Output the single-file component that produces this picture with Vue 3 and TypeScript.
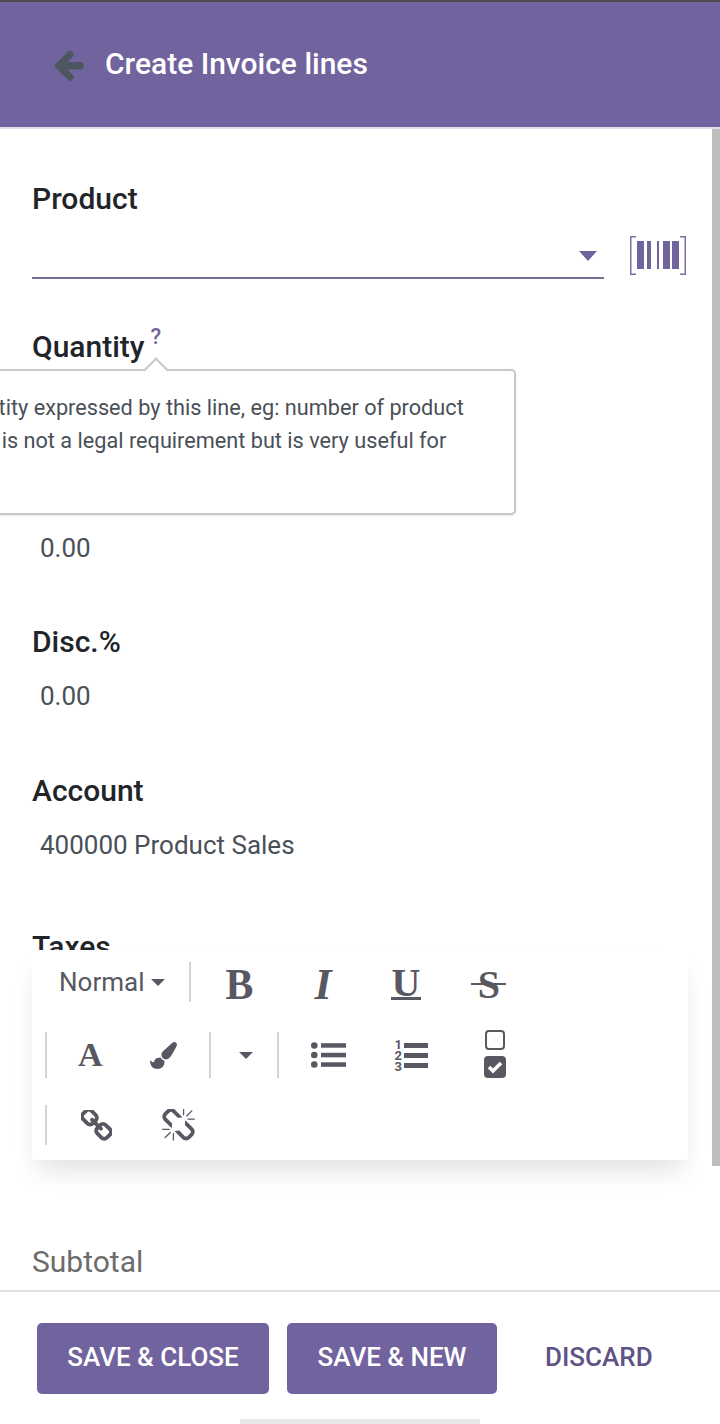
<script setup lang="ts">
interface Field {
  label: string
  value: string
  cls: string
}

const fields: Field[] = [
  { label: 'Unit Price', value: '0.00', cls: 'f-unit' },
  { label: 'Disc.%', value: '0.00', cls: 'f-disc' },
  { label: 'Account', value: '400000 Product Sales', cls: 'f-account' }
]
</script>

<template>
  <div class="screen">
    <header class="topbar">
      <svg class="back" viewBox="0 0 1792 1792" width="35" height="35">
        <path fill="currentColor" d="M1664 896v128q0 53-32.5 90.5t-84.5 37.5h-704l293 294q38 36 38 90t-38 90l-75 76q-37 37-90 37-52 0-91-37l-651-652q-37-37-37-90 0-52 37-91l651-650q38-38 91-38 52 0 90 38l75 74q38 38 38 91t-38 91l-293 293h704q52 0 84.5 37.5t32.5 90.5z" />
      </svg>
      <h1 class="title">Create Invoice lines</h1>
    </header>

    <main class="content">
      <section class="field f-product">
        <label class="label">Product</label>
        <div class="product-row">
          <div class="select"><span class="caret"></span></div>
          <svg class="barcode" viewBox="0 0 56 39" width="56" height="39">
            <path d="M6 .75H.75v37.5H6M50 .75h5.25v37.5H50" fill="none" stroke="#7c6da1" stroke-width="1.5" />
            <g fill="#71639e">
              <rect x="7" y="5" width="7" height="28" />
              <rect x="17" y="5" width="4" height="28" />
              <rect x="27" y="5" width="2" height="28" />
              <rect x="33" y="5" width="7" height="28" />
              <rect x="42" y="5" width="7" height="28" />
            </g>
          </svg>
        </div>
      </section>

      <section class="field f-qty">
        <label class="label">Quantity<sup class="help">?</sup></label>
        <div class="tooltip">
          <span class="tip-arrow"></span>
          The optional quantity expressed by this line, eg: number of product sold. The quantity is not a legal requirement but is very useful for some reports.
        </div>
      </section>

      <section v-for="f in fields" :key="f.label" class="field" :class="f.cls">
        <label class="label">{{ f.label }}</label>
        <div class="value">{{ f.value }}</div>
      </section>

      <section class="field f-taxes">
        <label class="label">Taxes</label>
      </section>

      <section class="field">
        <label class="label muted">Subtotal</label>
      </section>

      <div class="toolbar">
        <div class="tool-row row-one">
          <button class="style-btn">Normal<span class="mini-caret"></span></button>
          <i class="sep"></i>
          <span class="glyph bold">B</span>
          <span class="glyph italic">I</span>
          <span class="glyph under"><span>U</span></span>
          <span class="glyph strike"><span>S</span></span>
        </div>
        <div class="tool-row row-two">
          <i class="sep tall"></i>
          <span class="glyph font-a">A</span>
          <svg class="brush" viewBox="0 0 1792 1792" width="27" height="27">
            <path fill="currentColor" d="M1615 0q70 0 122.500 46.500t52.500 116.500q0 63-45 151-332 629-465 752-97 91-218 91-126 0-216.500-92.500t-90.500-219.500q0-128 92-212l638-579q59-54 130-54zm-909 1034q39 76 106.500 130t150.500 76l1 71q4 213-129.500 347t-348.500 134q-123 0-218-46.500t-152.500-127.500-86.500-183-29-220q7 5 41 30t62 44.500 59 36.500 46 17q41 0 55-37 25-66 57.500-112.500t69.500-76 88-47.500 103-25.500 125-10.500z" />
          </svg>
          <i class="sep tall after-brush"></i>
          <span class="mini-caret solo"></span>
          <i class="sep tall"></i>
          <svg class="list-ul" viewBox="0 0 35 26" width="35" height="26">
            <g fill="currentColor">
              <circle cx="3.300" cy="3.500" r="3.300" />
              <circle cx="3.300" cy="13" r="3.300" />
              <circle cx="3.300" cy="22.500" r="3.300" />
              <rect x="10" y="1.200" width="25" height="4.500" />
              <rect x="10" y="10.800" width="25" height="4.500" />
              <rect x="10" y="20.300" width="25" height="4.500" />
            </g>
          </svg>
          <div class="list-ol">
            <div class="nums"><span>1</span><span>2</span><span>3</span></div>
            <div class="bars"><b></b><b></b><b></b></div>
          </div>
          <div class="check-pair">
            <span class="box"></span>
            <svg viewBox="0 0 22 22" width="22" height="22">
              <rect width="22" height="22" rx="4" fill="currentColor" />
              <path d="M5 11l4 4 8-8" fill="none" stroke="#fff" stroke-width="3.600" />
            </svg>
          </div>
        </div>
        <div class="tool-row row-three">
          <i class="sep"></i>
          <svg class="link" viewBox="128 128 1536 1536" width="31" height="31">
            <path fill="currentColor" d="M1520 1216q0-40-28-68l-208-208q-28-28-68-28-42 0-72 32 3 3 19 18.500t21.500 21.500 15 19 13 25.500 3.500 27.500q0 40-28 68t-68 28q-15 0-27.500-3.500t-25.500-13-19-15-21.500-21.500-18.500-19q-33 31-33 73 0 40 28 68l206 207q27 27 68 27 40 0 68-26l147-146q28-28 28-67zm-703-705q0-40-28-68l-206-207q-28-28-68-28-39 0-68 27l-147 146q-28 28-28 67 0 40 28 68l208 208q27 27 68 27 42 0 72-31-3-3-19-18.500t-21.500-21.500-15-19-13-25.500-3.500-27.500q0-40 28-68t68-28q15 0 27.500 3.500t25.500 13 19 15 21.500 21.500 18.500 19q33-31 33-73zm895 705q0 120-85 203l-147 146q-83 83-203 83-121 0-204-85l-206-207q-83-83-83-203 0-123 88-209l-88-88q-86 88-208 88-120 0-204-84l-208-208q-84-84-84-204t85-203l147-146q83-83 203-83 121 0 204 85l206 207q83 83 83 203 0 123-88 209l88 88q86-88 208-88 120 0 204 84l208 208q84 84 84 204z" />
          </svg>
          <svg class="unlink" viewBox="64 64 1664 1664" width="33" height="33">
            <path fill="currentColor" d="M503 1271l-256 256q-10 9-23 9-12 0-23-9-9-10-9-23t9-23l256-256q10-9 23-9t23 9q9 10 9 23t-9 23zm169 41v320q0 14-9 23t-23 9-23-9-9-23v-320q0-14 9-23t23-9 23 9 9 23zm-224-224q0 14-9 23t-23 9h-320q-14 0-23-9t-9-23 9-23 23-9h320q14 0 23 9t9 23zm1264 128q0 120-85 203l-147 146q-83 83-203 83-121 0-204-85l-334-335q-21-21-42-56l239-18 273 274q27 27 68 27.500t68-26.500l147-146q28-28 28-67 0-40-28-68l-274-275 18-239q35 21 56 42l336 336q84 86 84 204zm-617-724l-239 18-273-274q-28-28-68-28-39 0-68 27l-147 146q-28 28-28 67 0 40 28 68l274 274-18 240q-35-21-56-42l-336-336q-84-86-84-204 0-120 85-203l147-146q83-83 203-83 121 0 204 85l334 335q21 21 42 56zm633 84q0 14-9 23t-23 9h-320q-14 0-23-9t-9-23 9-23 23-9h320q14 0 23 9t9 23zm-544-544v320q0 14-9 23t-23 9-23-9-9-23v-320q0-14 9-23t23-9 23 9 9 23zm407 151l-256 256q-11 9-23 9t-23-9q-9-10-9-23t9-23l256-256q10-9 23-9t23 9q9 10 9 23t-9 23z" />
          </svg>
        </div>
      </div>

      <div class="scrollbar"></div>
    </main>

    <footer class="footer">
      <button class="btn primary close">SAVE &amp; CLOSE</button>
      <button class="btn primary new">SAVE &amp; NEW</button>
      <button class="btn link-btn">DISCARD</button>
      <span class="home-bar"></span>
    </footer>
  </div>
</template>

<style>
html,
body {
  margin: 0;
  background: #fff;
}
</style>

<style scoped>
.screen {
  width: 720px;
  height: 1424px;
  display: flex;
  flex-direction: column;
  overflow: hidden;
  background: #fff;
  font-family: Roboto, "Noto Sans", sans-serif;
  position: relative;
}

.topbar {
  flex: none;
  height: 125px;
  border-top: 2px solid #4a4a4f;
  border-bottom: 2px solid #e2deee;
  background: #71639e;
  display: flex;
  align-items: center;
  padding-left: 51px;
  gap: 19px;
}

.back {
  color: #4c5661;
  flex: none;
}

.title {
  margin: 0 0 2px;
  color: #fff;
  font-size: 30px;
  font-weight: 500;
}

.content {
  flex: 1;
  position: relative;
  overflow: hidden;
  padding: 53px 32px 0;
}

.field {
  height: 148px;
  position: relative;
}

.f-qty {
  height: 147px;
}

.f-disc {
  height: 149px;
}

.f-account {
  height: 156px;
}

.f-taxes {
  height: 315px;
}

.label {
  display: block;
  font-size: 30px;
  line-height: 34px;
  font-weight: 500;
  color: #212529;
}

.label.muted {
  font-weight: 400;
  color: #6c6c6c;
}

.value {
  margin-top: 20px;
  padding-left: 8px;
  font-size: 26px;
  line-height: 34px;
  color: #495057;
}

.product-row {
  display: flex;
  align-items: flex-end;
  gap: 26px;
  margin-top: 1px;
}

.select {
  width: 572px;
  height: 60px;
  border-bottom: 2px solid #786c93;
  position: relative;
}

.caret {
  position: absolute;
  right: 7px;
  top: 34px;
  border: 9px solid transparent;
  border-top: 10px solid #71639e;
  border-bottom: 0;
}

.barcode {
  margin-bottom: 4px;
}

.help {
  font-size: 22px;
  font-weight: 500;
  color: #71639e;
  margin-left: 6px;
  vertical-align: 13px;
  line-height: 0;
}

.tooltip {
  position: absolute;
  left: -222px;
  top: 39px;
  width: 706px;
  height: 146px;
  box-sizing: border-box;
  background: #fff;
  border: 2px solid #c8c8c8;
  border-radius: 5px;
  padding: 20px 36px 0 13px;
  box-shadow: 0 1px 3px rgba(0, 0, 0, 0.08);
  font-size: 21.7px;
  line-height: 33px;
  color: #495057;
  z-index: 2;
}

.tip-arrow {
  position: absolute;
  left: 335px;
  top: -10px;
  width: 16px;
  height: 16px;
  background: #fff;
  border-left: 2px solid #c8c8c8;
  border-top: 2px solid #c8c8c8;
  transform: rotate(45deg);
}

.toolbar {
  position: absolute;
  left: 32px;
  top: 821px;
  width: 656px;
  height: 210px;
  background: #fff;
  border-radius: 4px;
  box-shadow: 0 16px 24px -6px rgba(0, 0, 0, 0.12);
  color: #585862;
  z-index: 3;
}

.tool-row {
  display: flex;
  align-items: center;
}

.row-one {
  height: 64px;
  padding-left: 27px;
}

.row-two {
  height: 82px;
  padding-left: 13px;
}

.row-three {
  height: 58px;
  padding-left: 13px;
}

.style-btn {
  display: flex;
  align-items: center;
  gap: 7px;
  border: 0;
  padding: 0;
  background: none;
  font: inherit;
  font-size: 26px;
  color: #585862;
}

.mini-caret {
  display: block;
  border: 7px solid transparent;
  border-top: 7px solid #585862;
  border-bottom: 0;
}

.sep {
  display: block;
  width: 2px;
  height: 40px;
  background: #d4d4d4;
  flex: none;
}

.sep.tall {
  height: 46px;
}

.row-one .sep {
  margin-left: 24px;
}

.glyph {
  font-family: "Liberation Serif", serif;
  font-weight: 700;
  color: #585862;
  line-height: 1;
  text-align: center;
}

.row-one .glyph {
  width: 83px;
  flex: none;
  font-size: 44px;
}

.bold {
  margin-left: 7px;
  padding-top: 6px;
  transform: scaleX(0.95);
}

.italic {
  font-style: italic;
  padding-top: 6px;
}

.under span {
  display: inline-block;
  font-size: 40px;
  line-height: 29px;
  width: 30px;
  border-bottom: 3px solid #585862;
}

.strike {
  padding-top: 4px;
}

.strike span {
  display: inline-block;
  font-size: 40px;
  width: 35px;
  position: relative;
}

.strike span::after {
  content: "";
  position: absolute;
  left: 0;
  right: 0;
  top: 18px;
  height: 2px;
  background: #585862;
}

.font-a {
  font-size: 34px;
  margin-left: 31px;
}

.brush {
  margin-left: 47px;
}

.after-brush {
  margin-left: 32px;
}

.solo {
  margin: 0 24px 0 28px;
}

.list-ul {
  margin-left: 32px;
}

.list-ol {
  display: flex;
  align-items: center;
  margin-left: 49px;
}

.nums {
  display: flex;
  flex-direction: column;
  font-size: 13px;
  line-height: 11px;
  font-weight: 700;
}

.bars {
  display: flex;
  flex-direction: column;
  gap: 5px;
  margin-left: 2px;
}

.bars b {
  display: block;
  width: 24px;
  height: 5px;
  background: #585862;
}

.check-pair {
  display: flex;
  flex-direction: column;
  align-items: center;
  gap: 6px;
  margin: -2px 0 0 56px;
}

.box {
  display: block;
  width: 16px;
  height: 16px;
  border: 2px solid #585862;
  border-radius: 4px;
}

.link {
  margin-left: 34px;
}

.unlink {
  margin-left: 50px;
}

.scrollbar {
  position: absolute;
  right: 0;
  top: 0;
  bottom: 124px;
  width: 8px;
  background: #bdbdbd;
}

.footer {
  flex: none;
  height: 134px;
  border-top: 2px solid #dee2e6;
  box-sizing: border-box;
  background: #fff;
  display: flex;
  align-items: flex-start;
  padding: 31px 0 0 37px;
  position: relative;
}

.btn {
  height: 71px;
  padding-bottom: 5px;
  border: 0;
  border-radius: 5px;
  font-family: inherit;
  font-size: 26px;
  font-weight: 500;
  cursor: pointer;
}

.primary {
  background: #71639e;
  color: #fff;
}

.close {
  width: 232px;
}

.new {
  width: 210px;
  margin-left: 18px;
}

.link-btn {
  background: none;
  color: #5f5285;
  margin-left: 20px;
  padding: 0 28px 3px;
}

.home-bar {
  position: absolute;
  left: 240px;
  bottom: 0;
  width: 240px;
  height: 5px;
  background: #e8e8e8;
  border-radius: 2px 2px 0 0;
}
</style>
